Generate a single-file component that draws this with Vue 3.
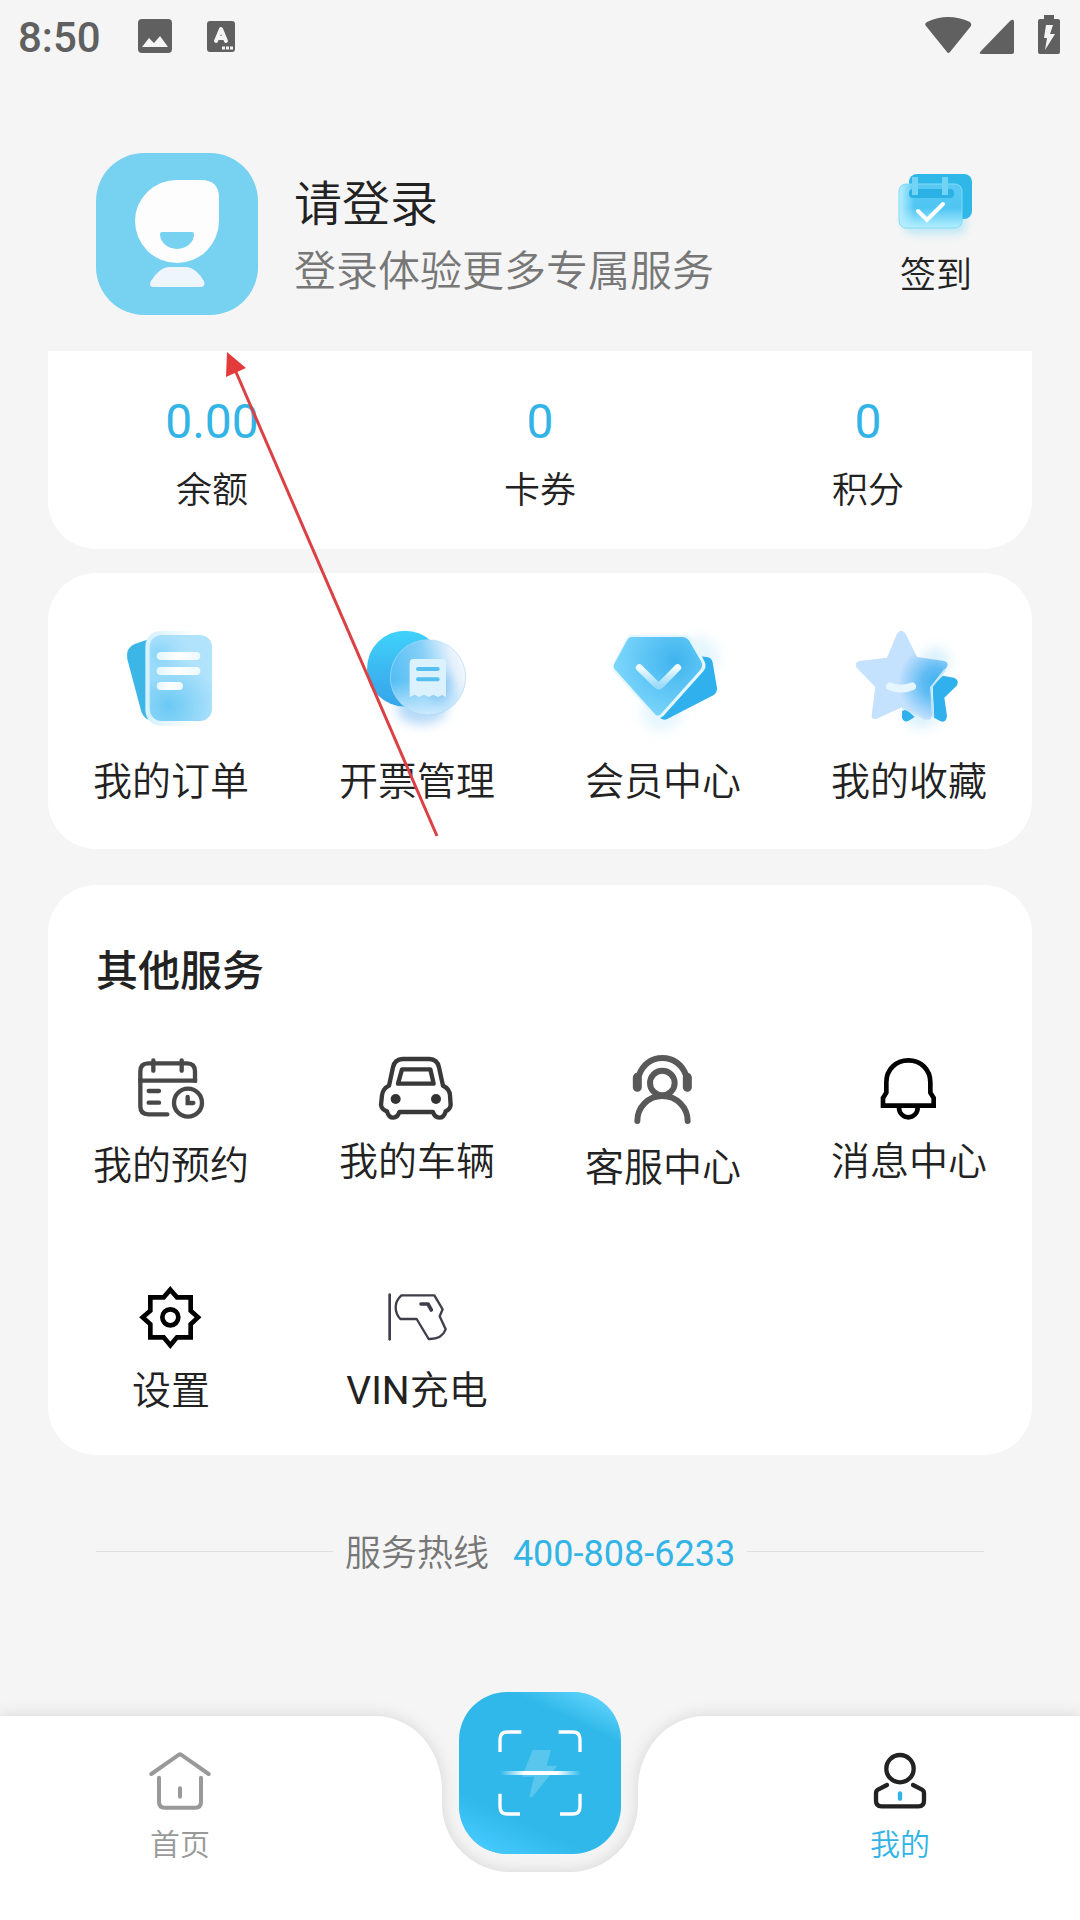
<script setup>
const stats = [
  { value: '0.00', label: '余额' },
  { value: '0', label: '卡券' },
  { value: '0', label: '积分' },
]
</script>

<template>
  <div class="page">
    <header class="status">
      <time class="clock">8:50</time>
      <div class="notices">
        <svg viewBox="131 14 48 48" aria-hidden="true">
          <rect x="138" y="19" width="34" height="34" rx="4" fill="#606060" />
          <path d="M142 47L149 38L154 43L160 36L168 47Z" fill="#f5f5f5" />
        </svg>
        <svg viewBox="197 14 48 48" aria-hidden="true">
          <rect x="207" y="21" width="28" height="31" rx="3" fill="#606060" />
          <path d="M216 41L221 29L226 41M218 38H224" fill="none" stroke="#f5f5f5" stroke-width="4" stroke-linecap="round" stroke-linejoin="round" />
          <path d="M222 48H234" stroke="#f5f5f5" stroke-width="3" stroke-dasharray="3 1" />
        </svg>
      </div>
      <div class="signals">
        <svg viewBox="926 14 48 48" aria-hidden="true">
          <path d="M926 26Q924 24 927 22Q948 12 970 22Q972 24 971 26L950 52Q948 54 947 52Z" fill="#606060" />
        </svg>
        <svg viewBox="974 14 48 48" aria-hidden="true">
          <path d="M981 51L1010 21Q1014 18 1014 22V52Q1014 54 1012 54H982Q978 54 981 51Z" fill="#606060" />
        </svg>
        <svg viewBox="1022 14 48 48" aria-hidden="true">
          <path d="M1044 15H1054V19H1058Q1060 19 1060 21V52Q1060 54 1058 54H1040Q1038 54 1038 52V21Q1038 19 1040 19H1044Z" fill="#606060" />
          <path d="M1046 25H1053L1050 34H1055L1045 50L1047 38H1044Z" fill="#f5f5f5" />
        </svg>
      </div>
    </header>

    <main>
      <section class="profile">
        <button class="login" type="button">
          <svg class="avatar" viewBox="96 153 162 162" aria-hidden="true">
            <rect x="96" y="153" width="162" height="162" rx="48" fill="#77d1f0" />
            <path d="M177 180H201Q219 180 219 198V221A42 42 0 0 1 135 221A42 41 0 0 1 177 180Z" fill="#fdfdfd" />
            <path d="M162 232H192Q194 232 194 234A17 15 0 0 1 160 234Q160 232 162 232Z" fill="#77d1f0" />
            <path d="M168 267H187Q196 268 204 281Q206 287 200 287H154Q148 287 151 281Q159 268 168 267Z" fill="#eef5fc" />
          </svg>
          <span class="greeting">
            <strong>请登录</strong>
            <small>登录体验更多专属服务</small>
          </span>
        </button>
        <button class="checkin" type="button">
          <svg viewBox="894 168 84 84" aria-hidden="true">
            <defs>
              <linearGradient id="ci" x1="0" y1="0" x2="0" y2="1">
                <stop offset="0" stop-color="#5bcaf3" /><stop offset=".55" stop-color="#4fc5f3" /><stop offset="1" stop-color="#b5f0ff" />
              </linearGradient>
              <linearGradient id="ciEdge">
                <stop offset="0" stop-color="#b9efff" /><stop offset=".25" stop-color="#b9efff" stop-opacity="0" />
              </linearGradient>
              <filter id="ciBlur" x="-30%" y="-50%" width="160%" height="200%"><feGaussianBlur stdDeviation="4" /></filter>
            </defs>
            <rect x="904" y="210" width="62" height="24" rx="8" fill="#9adef5" opacity=".6" filter="url(#ciBlur)" />
            <rect x="909" y="174" width="63" height="45" rx="8" fill="#2fb7e8" />
            <rect x="899" y="184" width="63" height="44" rx="7" fill="url(#ci)" />
            <rect x="899" y="184" width="63" height="44" rx="7" fill="url(#ciEdge)" stroke="#7fdcf9" />
            <rect x="909" y="189" width="45" height="9" rx="4" fill="#2cb1e4" />
            <path d="M915 177V195M945 177V195" stroke="#72d3f5" stroke-width="6" />
            <path d="M918 211L927 220L943 204" fill="none" stroke="#fff" stroke-width="4" stroke-linecap="round" />
          </svg>
          <span>签到</span>
        </button>
      </section>

      <section class="card stats">
        <a v-for="s in stats" :key="s.label" href="#">
          <b>{{ s.value }}</b>
          <span>{{ s.label }}</span>
        </a>
      </section>

      <section class="card shortcuts">
        <button type="button" class="entry">
          <svg viewBox="231 168 324 324" aria-hidden="true">
            <defs>
              <radialGradient id="or" gradientUnits="userSpaceOnUse" cx="385" cy="405" r="150">
                <stop offset="0" stop-color="#6ac9f4" /><stop offset="1" stop-color="#b2e3fc" />
              </radialGradient>
              <radialGradient id="or2" gradientUnits="userSpaceOnUse" cx="360" cy="250" r="110">
                <stop offset="0" stop-color="#78cff5" stop-opacity=".8" /><stop offset="1" stop-color="#b2e3fc" stop-opacity="0" />
              </radialGradient>
              <linearGradient id="halo"><stop offset="0" stop-color="#d3f1fe" /><stop offset=".8" stop-color="#fff" /></linearGradient>
              <linearGradient id="bar"><stop offset="0" stop-color="#e2f6ff" /><stop offset=".5" stop-color="#fff" /><stop offset="1" stop-color="#ecf9ff" /></linearGradient>
            </defs>
            <path d="M262 265Q256 230 284 219L335 202V448Q312 445 304 422Z" fill="#3bb6e6" />
            <rect x="316" y="180" width="190" height="284" rx="46" fill="url(#halo)" />
            <rect x="329" y="192" width="187" height="258" rx="36" fill="url(#or)" />
            <rect x="329" y="192" width="187" height="258" rx="36" fill="url(#or2)" />
            <g fill="url(#bar)">
              <rect x="350" y="243" width="131" height="24" rx="12" />
              <rect x="350" y="288" width="131" height="24" rx="12" />
              <rect x="350" y="333" width="79" height="24" rx="12" />
            </g>
          </svg>
          <span>我的订单</span>
        </button>
        <button type="button" class="entry">
          <svg viewBox="969 168 324 324" aria-hidden="true">
            <defs>
              <linearGradient id="inBack" x1=".6" y1="0" x2=".6" y2="1"><stop offset="0" stop-color="#40d2fb" /><stop offset=".6" stop-color="#3bb4ef" /><stop offset="1" stop-color="#35a6ea" /></linearGradient>
              <linearGradient id="inFront" x1="0" y1=".6" x2="1" y2=".35"><stop offset="0" stop-color="#50bdf3" /><stop offset=".5" stop-color="#86cff7" /><stop offset=".85" stop-color="#e4f1fc" /><stop offset="1" stop-color="#f3f7fd" /></linearGradient>
              <linearGradient id="inFade" x1="0" y1="0" x2="0" y2="1"><stop offset=".55" stop-color="#cdeafd" stop-opacity="0" /><stop offset="1" stop-color="#cdeafd" /></linearGradient>
              <filter id="blur18" x="-80%" y="-80%" width="260%" height="260%"><feGaussianBlur stdDeviation="18" /></filter>
            </defs>
            <ellipse cx="1145" cy="412" rx="75" ry="48" fill="#6bb3f0" opacity=".5" filter="url(#blur18)" />
            <circle cx="1095" cy="293" r="114" fill="url(#inBack)" />
            <circle cx="1164" cy="319" r="113" fill="url(#inFront)" />
            <circle cx="1164" cy="319" r="113" fill="url(#inFade)" stroke="#b4daf5" stroke-width="2" />
            <ellipse cx="1200" cy="345" rx="32" ry="48" fill="#5aa9ee" opacity=".5" filter="url(#blur18)" />
            <path d="M1121 264H1206Q1218 264 1218 276V378L1206 372L1194 378L1180 371L1166 378L1152 371L1138 378L1124 371L1109 378V276Q1109 264 1121 264Z" fill="#dbf2fe" />
            <path d="M1134 294H1193M1134 325H1193" stroke="#55bff1" stroke-width="12" stroke-linecap="round" />
          </svg>
          <span>开票管理</span>
        </button>
        <button type="button" class="entry">
          <svg viewBox="207 168 324 324" aria-hidden="true">
            <defs>
              <radialGradient id="me" gradientUnits="userSpaceOnUse" cx="405" cy="270" r="185"><stop offset="0" stop-color="#3fb4ee" /><stop offset="1" stop-color="#7ed7fc" /></radialGradient>
              <linearGradient id="meTick" x1="0" y1="0" x2="0" y2="1"><stop offset="0" stop-color="#f0fbff" /><stop offset="1" stop-color="#9cdcf9" /></linearGradient>
            </defs>
            <g filter="url(#blur18)" opacity=".18" fill="#78cdf5">
              <circle cx="475" cy="255" r="60" /><ellipse cx="365" cy="425" rx="60" ry="55" />
            </g>
            <path d="M480 256L500 258Q516 260 518 275L531 350Q532 365 520 373L380 445Q370 449 360 440Z" fill="#30b1ee" />
            <path d="M268 191H436Q450 192 458 205L494 272Q501 286 490 301L370 435Q355 448 340 435L225 305Q212 290 222 275L258 205Z" fill="#e4f6fe" />
            <path d="M276 198H426Q440 198 448 210L484 272Q490 286 480 298L362 430Q354 438 345 430L227 298Q217 287 224 276L260 210Q266 198 276 198Z" fill="url(#me)" />
            <path d="M298 290L348 340Q356 348 364 340L413 290" fill="none" stroke="url(#meTick)" stroke-width="21" stroke-linecap="round" />
          </svg>
          <span>会员中心</span>
        </button>
        <button type="button" class="entry">
          <svg viewBox="945 168 324 324" aria-hidden="true">
            <defs>
              <radialGradient id="st" gradientUnits="userSpaceOnUse" cx="1190" cy="335" r="115"><stop offset="0" stop-color="#3fb2ef" /><stop offset=".4" stop-color="#62bdf4" /><stop offset="1" stop-color="#c4e1fe" /></radialGradient>
            </defs>
            <g filter="url(#blur18)" opacity=".24" fill="#6dc4f5">
              <circle cx="1185" cy="272" r="44" /><ellipse cx="1145" cy="445" rx="50" ry="26" />
            </g>
            <path d="M1178 345L1208 314L1242 320Q1260 328 1250 344L1213 380L1221 435Q1219 456 1202 451L1182 440Z" fill="#30b1ee" />
            <path d="M1086 420V440Q1092 456 1106 449L1124 438L1100 415Z" fill="#30b1ee" />
            <path d="M1131 258L1213 270Q1230 276 1219 290L1173 348L1176 432Q1174 450 1157 445L1086 409L1010 443Q994 448 995 432L1006 348L950 290Q942 275 958 270L1041 260L1071 188Q1084 170 1097 188Z" fill="url(#st)" />
            <path d="M1215 296L1173 350L1180 438M1157 445L1086 409" fill="none" stroke="#c3e6fb" stroke-width="6" />
            <path d="M1050 346Q1082 360 1116 346" fill="none" stroke="#e6f6ff" stroke-width="24" stroke-linecap="round" />
          </svg>
          <span>我的收藏</span>
        </button>
      </section>

      <section class="card services">
        <h2>其他服务</h2>
        <div class="grid">
          <button type="button" class="entry">
            <svg class="h76" viewBox="285 549 216 228" aria-hidden="true">
              <g fill="none" stroke="#484848" stroke-width="13" stroke-linecap="round">
                <path d="M465 632V604Q465 580 441 580H325Q301 580 301 604V709Q301 733 325 733H382" />
                <path d="M301 632H465" stroke-linecap="square" />
                <path d="M340 571V602M425 571V602M326 663H357M326 698H357" />
                <circle cx="444" cy="698" r="42" />
                <path d="M443 681V699H460" />
              </g>
            </svg>
            <span>我的预约</span>
          </button>
          <button type="button" class="entry">
            <svg class="w78" viewBox="1014 549 234 216" aria-hidden="true">
              <g fill="none" stroke="#383838" stroke-width="13" stroke-linejoin="round">
                <path d="M1088 567H1168Q1192 568 1197 592L1209 647Q1229 656 1230 676L1232 705Q1230 719 1217 724Q1212 743 1198 743Q1184 742 1179 726H1078Q1073 742 1060 743Q1046 743 1041 724Q1025 719 1023 705L1026 676Q1028 656 1047 647L1059 592Q1064 568 1088 567Z" />
                <path d="M1086 598H1171L1181 641H1074Z" />
              </g>
              <circle cx="1067" cy="687" r="15" fill="#333" /><circle cx="1188" cy="687" r="15" fill="#333" />
            </svg>
            <span>我的车辆</span>
          </button>
          <button type="button" class="entry">
            <svg class="h78" viewBox="261 99 216 234" aria-hidden="true">
              <g fill="none" stroke="#595959" stroke-width="18" stroke-linecap="round">
                <circle cx="367" cy="189" r="37" />
                <path d="M296 168C308 132 336 114 367 114S427 132 439 168" />
                <path d="M292 303C292 262 324 228 367 228S443 262 443 303" />
                <path d="M292 172V202M442 172V202" stroke-width="27" />
              </g>
            </svg>
            <span>客服中心</span>
          </button>
          <button type="button" class="entry">
            <svg viewBox="999 99 216 216" aria-hidden="true">
              <g fill="none" stroke="#000" stroke-width="14">
                <path d="M1029 257V234L1039 218V187C1039 148 1068 121 1105 121S1171 148 1171 187V218L1181 234V257Z" />
                <path d="M1077 257V263A28 29 0 0 0 1133 263V257" />
              </g>
            </svg>
            <span>消息中心</span>
          </button>
          <button type="button" class="entry">
            <svg viewBox="285 96 216 216" aria-hidden="true">
              <g fill="none" stroke="#000" stroke-width="14">
                <path d="M391 119L411 142H452V182L474 202L452 223V262H411L391 286L371 262H331V223L308 202L331 182V142H371Z" />
                <circle cx="391" cy="202" r="24" />
              </g>
            </svg>
            <span>设置</span>
          </button>
          <button type="button" class="entry">
            <svg viewBox="1023 96 216 216" aria-hidden="true">
              <g fill="none" stroke="#3f3e4a" stroke-width="7" stroke-linejoin="round" stroke-linecap="round">
                <path d="M1049 134V268" stroke-width="8" />
                <path d="M1084 136H1183L1208 178L1199 199L1217 238Q1206 268 1166 267L1130 207H1081Q1067 193 1067 172Q1067 152 1084 136Z" />
                <path d="M1143 162H1164L1174 180" stroke-width="11" />
              </g>
            </svg>
            <span><span class="latin">VIN</span>充电</span>
          </button>
        </div>
      </section>

      <p class="hotline">
        <span>服务热线</span>
        <a href="tel:400-808-6233">400-808-6233</a>
      </p>
    </main>

    <nav class="tabs">
      <div class="backdrop" aria-hidden="true">
        <i></i>
        <svg viewBox="375 0 330 204">
          <path d="M375 0C412 0 442 32 442 74V88A68 68 0 0 0 510 156H570A68 68 0 0 0 638 88V74C638 32 668 0 705 0V204H375Z" fill="#fff" />
        </svg>
        <i></i>
      </div>
      <a class="tab" href="#">
        <svg viewBox="432 225 216 216" aria-hidden="true">
          <path d="M454 312L534 256Q540 250 546 256L626 312M477 323V396Q477 413 494 413H586Q603 413 603 396V323M540 355V380" fill="none" stroke="#999" stroke-width="12" stroke-linecap="round" />
        </svg>
        <span>首页</span>
      </a>
      <button class="scan" type="button" aria-label="扫码充电">
        <svg viewBox="177 66 486 486" aria-hidden="true">
          <defs>
            <linearGradient id="scTop" gradientUnits="userSpaceOnUse" x1="522" y1="156" x2="572" y2="50"><stop offset="0" stop-color="#66d6ff" stop-opacity="0" /><stop offset="1" stop-color="#66d6ff" /></linearGradient>
            <linearGradient id="scLow" gradientUnits="userSpaceOnUse" x1="320" y1="432" x2="268" y2="542"><stop offset="0" stop-color="#45c9fe" stop-opacity="0" /><stop offset="1" stop-color="#45c9fe" /></linearGradient>
            <linearGradient id="scLine"><stop offset="0" stop-color="#fff" stop-opacity="0" /><stop offset=".3" stop-color="#fff" /><stop offset=".7" stop-color="#fff" /><stop offset="1" stop-color="#fff" stop-opacity="0" /></linearGradient>
          </defs>
          <rect x="177" y="66" width="486" height="486" rx="144" fill="#2fb8e9" />
          <rect x="177" y="66" width="486" height="486" rx="144" fill="url(#scTop)" />
          <rect x="177" y="66" width="486" height="486" rx="144" fill="url(#scLow)" />
          <path d="M398 240H453L440 287H473L396 382H388L402 320H366Z" fill="#fff" opacity=".2" />
          <path d="M300 246V208Q300 186 322 186H364M476 186H518Q540 186 540 208V246M300 371V410Q300 432 322 432H360M540 371V410Q540 432 518 432H480" fill="none" stroke="#fff" stroke-width="10" />
          <rect x="300" y="303" width="244" height="12" fill="url(#scLine)" />
        </svg>
      </button>
      <a class="tab active" href="#" aria-current="page">
        <svg viewBox="552 735 216 216" aria-hidden="true">
          <g fill="none" stroke="#222" stroke-width="13" stroke-linecap="round">
            <circle cx="660" cy="806" r="41" />
            <path d="M621 855L594 869Q588 872 588 880V902Q588 918 604 919H716Q732 918 732 902V880Q732 872 726 869L699 855" />
            <path d="M660 880V896" stroke="#33b4e6" />
          </g>
        </svg>
        <span>我的</span>
      </a>
    </nav>

    <svg class="pointer" viewBox="220 346 224 496" aria-hidden="true">
      <path d="M236 372L437 836" stroke="#db4044" stroke-width="3" />
      <path d="M227 352L226 377L246 368Z" fill="#e33b3b" />
    </svg>
  </div>
</template>

<style>
body {
  margin: 0;
  background: #f5f5f5;
}
</style>

<style scoped>
.page {
  position: relative;
  display: flex;
  flex-direction: column;
  min-height: 100vh;
  background: #f5f5f5;
  color: #222;
  font-family: Roboto, "Noto Sans CJK SC", sans-serif;
  font-weight: 350;
}

svg {
  display: block;
  overflow: visible;
}

button {
  border: 0;
  padding: 0;
  background: none;
  color: inherit;
  font: inherit;
  cursor: pointer;
}

a {
  color: inherit;
  text-decoration: none;
}

.latin {
  font-weight: 400;
}

.status {
  display: flex;
  align-items: center;
  box-sizing: border-box;
  height: 76px;
  padding: 0 10px 0 18px;
  color: #606060;
}

.clock {
  margin-right: 30px;
  font-size: 42px;
  font-weight: 500;
  line-height: 52px;
}

.status svg {
  width: 48px;
  height: 48px;
}

.notices,
.signals {
  display: flex;
}

.notices {
  gap: 18px;
}

.signals {
  margin-left: auto;
}

.profile {
  display: flex;
  justify-content: space-between;
  align-items: flex-start;
  padding: 77px 96px 36px;
}

.login {
  display: flex;
  gap: 36px;
  text-align: left;
}

.avatar {
  width: 162px;
  height: 162px;
}

.greeting {
  display: flex;
  flex-direction: column;
  padding-top: 18px;
}

.greeting strong {
  font-size: 48px;
  font-weight: inherit;
  line-height: 68px;
}

.greeting small {
  font-size: 42px;
  line-height: 66px;
  color: #777;
}

.checkin {
  display: flex;
  flex-direction: column;
  align-items: center;
  gap: 3px;
  width: 96px;
  padding-top: 15px;
  font-size: 36px;
  line-height: 42px;
}

.checkin svg {
  width: 84px;
  height: 84px;
}

.card {
  margin: 0 48px;
  border-radius: 48px;
  background: #fff;
}

.stats {
  display: grid;
  grid-template-columns: repeat(3, 1fr);
  border-radius: 0 0 48px 48px;
  padding: 38px 0 34px;
}

.stats a {
  display: flex;
  flex-direction: column;
  align-items: center;
  gap: 12px;
}

.stats b {
  font-size: 48px;
  font-weight: 400;
  line-height: 66px;
  color: #33b4e6;
}

.stats span {
  font-size: 36px;
  line-height: 48px;
}

.shortcuts {
  display: grid;
  grid-template-columns: repeat(4, 1fr);
  margin-top: 24px;
  padding: 54px 0 40px;
}

.entry {
  display: flex;
  flex-direction: column;
  align-items: center;
  gap: 10px;
  font-size: 39px;
  line-height: 54px;
}

.shortcuts .entry {
  gap: 20px;
}

.shortcuts svg {
  width: 108px;
  height: 108px;
}

.services {
  margin-top: 36px;
  padding: 57px 0 37px;
}

.services h2 {
  margin: 0 0 51px;
  padding: 0 48px;
  font-size: 42px;
  font-weight: 500;
  line-height: 60px;
}

.grid {
  display: grid;
  grid-template-columns: repeat(4, 1fr);
  align-items: start;
  row-gap: 87px;
}

.grid svg {
  width: 72px;
  height: 72px;
}

.grid .w78 {
  width: 78px;
}

.grid .h76 {
  height: 76px;
}

.grid .h78 {
  height: 78px;
}

.hotline {
  display: flex;
  align-items: center;
  margin: 72px 96px 48px;
  font-size: 36px;
  line-height: 54px;
  color: #777;
}

.hotline::before,
.hotline::after {
  content: "";
  flex: 1;
  height: 1px;
  margin-bottom: 5px;
  background: #dedede;
}

.hotline span {
  margin: 0 24px 0 12px;
}

.hotline a {
  margin-right: 12px;
  font-weight: 400;
  color: #33b4e6;
}

.tabs {
  position: relative;
  display: grid;
  grid-template-columns: repeat(3, 1fr);
  justify-items: center;
  align-items: start;
  height: 204px;
  margin-top: auto;
}

.backdrop {
  position: absolute;
  inset: 0;
  display: flex;
  filter: drop-shadow(0 0 8px rgba(0, 0, 0, 0.13));
}

.backdrop i {
  flex: 1;
  background: #fff;
}

.backdrop svg {
  width: 330px;
  height: 204px;
}

.tab {
  position: relative;
  display: flex;
  flex-direction: column;
  align-items: center;
  gap: 7px;
  padding-top: 29px;
  font-size: 30px;
  line-height: 42px;
  color: #999;
}

.tab svg {
  width: 72px;
  height: 72px;
}

.active {
  color: #33b4e6;
}

.scan {
  position: relative;
  margin-top: -24px;
}

.scan svg {
  width: 162px;
  height: 162px;
}

.pointer {
  position: absolute;
  top: 346px;
  left: 220px;
  width: 224px;
  height: 496px;
  pointer-events: none;
}
</style>
